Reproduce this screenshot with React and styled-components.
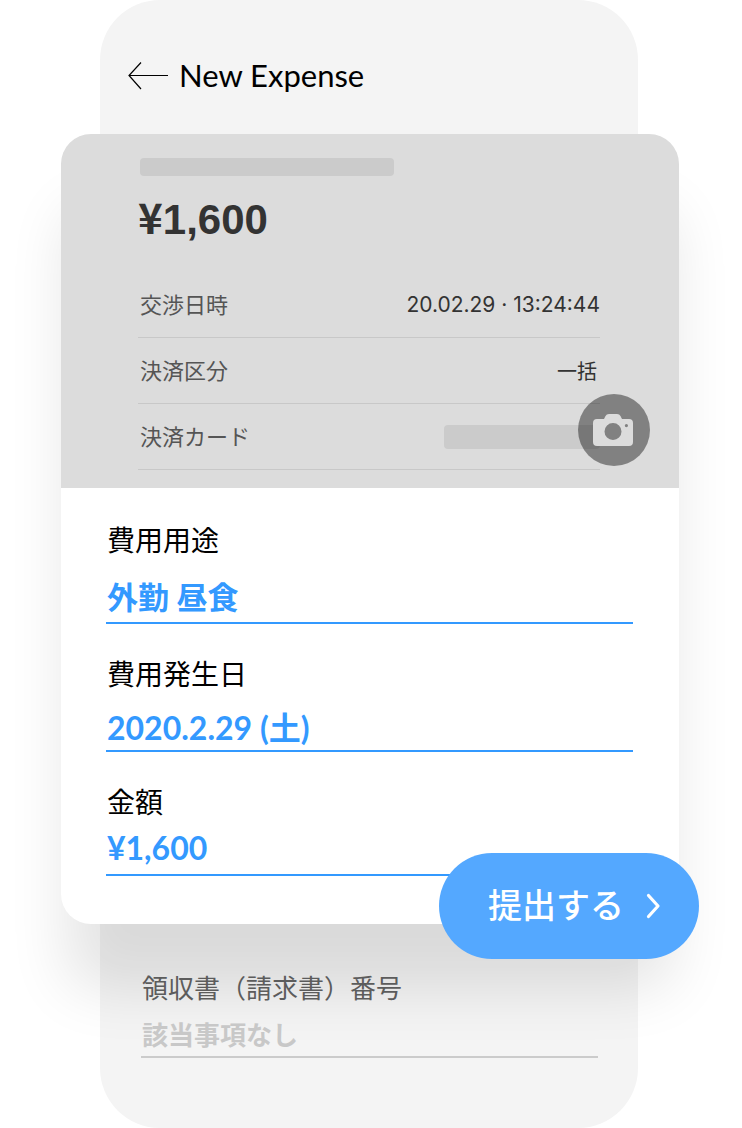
import React, { useState } from "react";
import styled, { createGlobalStyle } from "styled-components";

const GlobalStyle = createGlobalStyle`
  * {
    box-sizing: border-box;
  }
  body {
    margin: 0;
    background-color: #fff;
    font-family: Lato, "Noto Sans CJK JP", sans-serif;
    overflow-x: hidden;
  }
`;

const Phone = styled.main`
  margin: 0 104px 0 100px;
  background-color: #f4f4f4;
  border-radius: 60px;
`;

const Header = styled.header`
  display: flex;
  align-items: center;
  gap: 10px;
  padding: 50px 28px 32px;
`;

const BackButton = styled.button`
  display: flex;
  padding: 0;
  border: none;
  background: none;
  cursor: pointer;
`;

const Title = styled.h1`
  margin: 0;
  padding-bottom: 2px;
  font-size: 31px;
  line-height: 50px;
  font-weight: 400;
  color: #000;
`;

const Card = styled.form`
  position: relative;
  margin: 0 -41px 0 -39px;
  background-color: #fff;
  border-radius: 30px;
  box-shadow: 0 70px 60px -6px rgba(0, 0, 0, 0.11);
`;

const Receipt = styled.section`
  position: relative;
  padding: 24px 79px 18px 77px;
  background-color: #dcdcdc;
  border-radius: 30px 30px 0 0;
`;

const Bar = styled.div`
  width: ${(props) => props.$width};
  height: ${(props) => props.$height};
  background-color: #cbcbcb;
  border-radius: 4px;
`;

const Shop = styled.div`
  padding-left: 2px;
`;

const Total = styled.p`
  margin: 20px 0 28px;
  font-family: "Liberation Sans", sans-serif;
  font-size: 42px;
  line-height: 48px;
  font-weight: 700;
  color: #333;
`;

const Yen = styled.span`
  font-family: "Noto Sans CJK JP", sans-serif;
  line-height: 0;
`;

const Details = styled.dl`
  margin: 0;
`;

const Row = styled.div`
  display: flex;
  align-items: center;
  justify-content: space-between;
  height: 66px;
  padding-left: 2px;
  border-bottom: 1px solid #c8c8c8;
`;

const RowLabel = styled.dt`
  padding-bottom: 4px;
  font-size: 22px;
  color: #555;
`;

const RowValue = styled.dd`
  margin: 0;
  padding-right: ${(props) => (props.$small ? "3px" : "0")};
  font-family: Inter, "Noto Sans CJK JP", sans-serif;
  font-size: ${(props) => (props.$small ? "20px" : "21px")};
  color: #333;
`;

const CameraButton = styled.button`
  position: absolute;
  right: 29px;
  bottom: 22px;
  display: flex;
  align-items: center;
  justify-content: center;
  width: 72px;
  height: 72px;
  padding: 0 2px 0 0;
  border: none;
  border-radius: 50%;
  background-color: rgba(0, 0, 0, 0.41);
  cursor: pointer;
`;

const Fields = styled.div`
  display: flex;
  flex-direction: column;
  gap: 30px;
  padding: 32px 46px 48px 45px;
`;

const Field = styled.div`
  display: flex;
  flex-direction: column;
  gap: ${(props) => props.$gap};
`;

const Label = styled.label`
  padding-left: 1px;
  font-size: 28px;
  line-height: 40px;
  color: #000;
`;

const Input = styled.input`
  width: 100%;
  height: 48px;
  padding: 0 1px ${(props) => props.$lift || "0"};
  border: none;
  border-bottom: 2px solid #3399ff;
  border-radius: 0;
  outline: none;
  background: none;
  font-family: inherit;
  font-size: ${(props) => props.$size};
  font-weight: 700;
  color: #3399ff;
`;

const SubmitButton = styled.button`
  position: absolute;
  right: -20px;
  bottom: -35px;
  display: flex;
  align-items: center;
  justify-content: space-between;
  width: 260px;
  height: 106px;
  padding: 0 38px 0 49px;
  border: none;
  border-radius: 53px;
  background-color: #54a8ff;
  font-family: inherit;
  font-size: 34px;
  font-weight: 500;
  color: #fff;
  cursor: pointer;
`;

const SubmitText = styled.span`
  padding-bottom: 6px;
`;

const Footer = styled.section`
  display: flex;
  flex-direction: column;
  padding: 44px 40px 70px 41px;
`;

const FooterLabel = styled(Label)`
  position: relative;
  font-size: 26px;
  color: #5c5c5c;
`;

const FooterInput = styled(Input)`
  position: relative;
  height: 50px;
  padding: 6px 1px 0;
  border-bottom-color: #cbcbcb;
  &::placeholder {
    color: #c8c8c8;
    opacity: 1;
  }
`;

const ArrowIcon = () => (
  <svg width="41" height="28" viewBox="0 0 41 28" fill="none" stroke="#000">
    <path d="M13 .5 1 13.5l12 13.5M1 13.5h39" strokeWidth="1.2" />
  </svg>
);

const CameraIcon = () => (
  <svg width="40" height="32" viewBox="0 0 40 32" fill="#dcdcdc">
    <path
      fillRule="evenodd"
      d="M4 5h7l1.500-3Q13.500 0 16 0h8q2.500 0 3.500 2L29 5h7a4 4 0 0 1 4 4v19a4 4 0 0 1-4 4H4a4 4 0 0 1-4-4V9a4 4 0 0 1 4-4Zm16 4a8.500 8.500 0 1 0 0 17 8.500 8.500 0 0 0 0-17Zm13.400 1a1.600 1.600 0 1 0 0 3.200 1.600 1.600 0 0 0 0-3.200Z"
    />
  </svg>
);

const ChevronIcon = () => (
  <svg width="15" height="26" viewBox="0 0 15 26" fill="none" stroke="#fff">
    <path
      d="M2.500 2.500 12 13 2.500 23.500"
      strokeWidth="3.2"
      strokeLinecap="round"
      strokeLinejoin="round"
    />
  </svg>
);

const fields = [
  { name: "purpose", label: "費用用途", gap: "16px", size: "31px", lift: "8px" },
  { name: "date", label: "費用発生日", gap: "10px", size: "32px", lift: "2px" },
  { name: "amount", label: "金額", gap: "6px", size: "32px", lift: "8px" },
];

export default function App() {
  const [expense, setExpense] = useState({
    purpose: "外勤 昼食",
    date: "2020.2.29 (土)",
    amount: "¥1,600",
  });

  const handleChange = (event) => {
    setExpense({ ...expense, [event.target.name]: event.target.value });
  };

  const handleSubmit = (event) => {
    event.preventDefault();
  };

  return (
    <>
      <GlobalStyle />
      <Phone>
        <Header>
          <BackButton type="button" aria-label="Back">
            <ArrowIcon />
          </BackButton>
          <Title>New Expense</Title>
        </Header>
        <Card id="expense" onSubmit={handleSubmit}>
          <Receipt>
            <Shop>
              <Bar $width="254px" $height="18px" />
            </Shop>
            <Total>
              <Yen>¥</Yen>1,600
            </Total>
            <Details>
              <Row>
                <RowLabel>交渉日時</RowLabel>
                <RowValue>20.02.29 · 13:24:44</RowValue>
              </Row>
              <Row>
                <RowLabel>決済区分</RowLabel>
                <RowValue $small>一括</RowValue>
              </Row>
              <Row>
                <RowLabel>決済カード</RowLabel>
                <RowValue>
                  <Bar $width="156px" $height="24px" />
                </RowValue>
              </Row>
            </Details>
            <CameraButton type="button" aria-label="Camera">
              <CameraIcon />
            </CameraButton>
          </Receipt>
          <Fields>
            {fields.map((field) => (
              <Field key={field.name} $gap={field.gap}>
                <Label htmlFor={field.name}>{field.label}</Label>
                <Input
                  id={field.name}
                  name={field.name}
                  $size={field.size}
                  $lift={field.lift}
                  value={expense[field.name]}
                  onChange={handleChange}
                />
              </Field>
            ))}
          </Fields>
          <SubmitButton type="submit">
            <SubmitText>提出する</SubmitText>
            <ChevronIcon />
          </SubmitButton>
        </Card>
        <Footer>
          <FooterLabel htmlFor="number">領収書（請求書）番号</FooterLabel>
          <FooterInput
            id="number"
            form="expense"
            $size="26px"
            placeholder="該当事項なし"
          />
        </Footer>
      </Phone>
    </>
  );
}
